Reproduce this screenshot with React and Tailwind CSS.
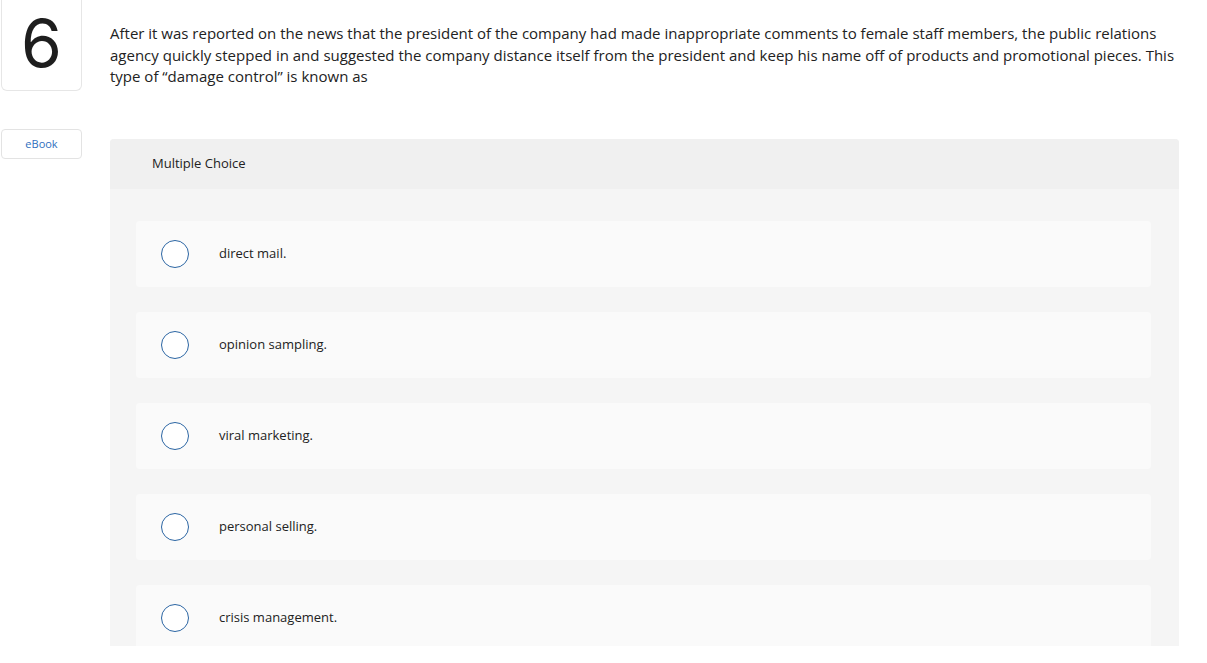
import React from 'react';

const options = [
  'direct mail.',
  'opinion sampling.',
  'viral marketing.',
  'personal selling.',
  'crisis management.',
];

const App = () => {
  return (
    <div
      className="h-[646px] overflow-hidden bg-white text-[#222]"
      style={{ fontFamily: '"Open Sans", Lato, sans-serif' }}
    >
      <div className="flex">
        <div className="w-[82px] shrink-0 flex flex-col">
          <div className="ml-px h-[91px] w-[81px] border border-t-0 border-[#e6e6e6] rounded-b-md flex items-center justify-center">
            <span
              className="text-[66px] leading-[80px] font-normal text-[#1e1e1e] -mt-[4px]"
              style={{ fontFamily: 'Inter, "Open Sans", sans-serif' }}
            >
              6
            </span>
          </div>
          <div className="ml-px mt-[38px] h-[30px] w-[81px] border border-[#e3e3e3] rounded flex items-center justify-center text-[11px] text-[#2f6fbe]">
            eBook
          </div>
        </div>

        <div className="ml-[28px] mr-[28px] flex-1">
          <p className="pt-[23px] text-[15px] leading-[21.5px] text-[#222]">
            After it was reported on the news that the president of the company had made inappropriate comments to female staff members, the public relations agency quickly stepped in and suggested the company distance itself from the president and keep his name off of products and promotional pieces. This type of “damage control” is known as
          </p>

          <div className="mt-[51px] bg-[#f5f5f5] rounded-t">
            <div className="h-[50px] bg-[#f0f0f0] rounded-t flex items-center px-[42px] text-[13px] text-[#222]">
              Multiple Choice
            </div>
            <div className="px-[26px] pt-[32px] pr-[28px] flex flex-col gap-[25px]">
              {options.map((opt) => (
                <div
                  key={opt}
                  className="h-[66px] bg-[#fafafa] rounded flex items-center"
                >
                  <span className="ml-[25px] w-[28px] h-[28px] rounded-full border-[1.5px] border-[#2b65a3] bg-white shrink-0" />
                  <span className="ml-[30px] text-[13px] text-[#222]">{opt}</span>
                </div>
              ))}
            </div>
          </div>
        </div>
      </div>
    </div>
  );
};

export default App;
